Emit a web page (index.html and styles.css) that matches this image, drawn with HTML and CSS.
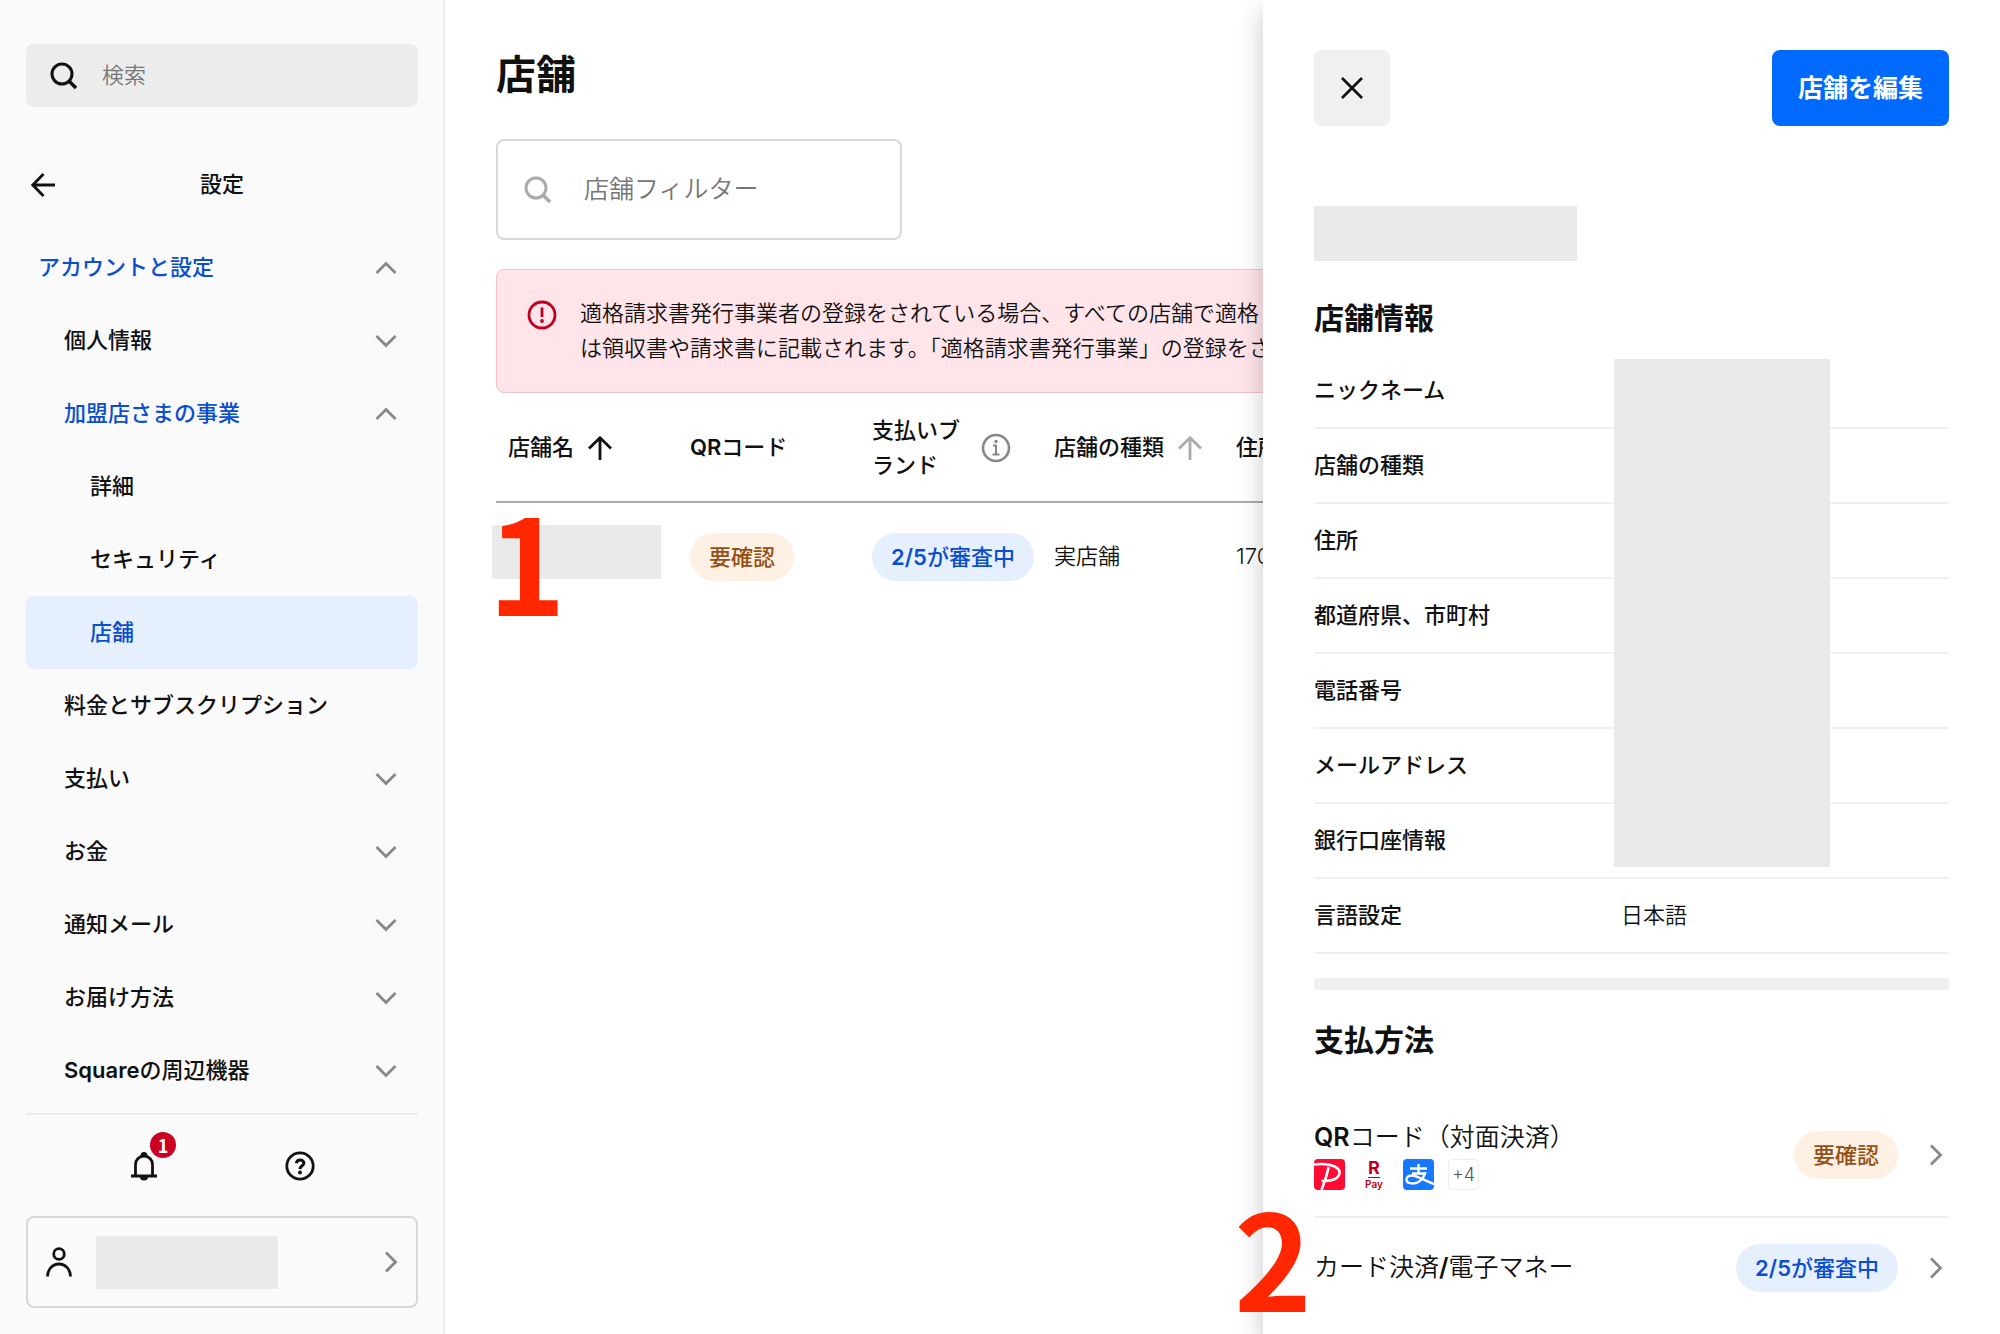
FILE: index.html
```html
<!DOCTYPE html>
<html lang="ja">
<head>
<meta charset="utf-8">
<meta name="viewport" content="width=device-width, initial-scale=1">
<title>店舗</title>
<link rel="stylesheet" href="styles.css">
</head>
<body>
<svg class="defs" aria-hidden="true">
  <symbol id="search" viewBox="0 0 28 28"><circle cx="12" cy="12" r="10" fill="none" stroke="currentColor" stroke-width="3"/><path d="M19 19l7 7" fill="none" stroke="currentColor" stroke-width="3.6"/></symbol>
  <symbol id="chevron" viewBox="0 0 22 22"><path d="M1.5 6L11 15.5 20.5 6" fill="none" stroke="currentColor" stroke-width="2.8"/></symbol>
  <symbol id="arrow" viewBox="0 0 24 24"><path d="M12 24V2M1 12.5L12 1.800l11 10.700" fill="none" stroke="currentColor" stroke-width="2.8"/></symbol>
</svg>
<div class="app">
  <aside class="sidebar">
    <label class="search">
      <svg class="search-icon"><use href="#search"/></svg>
      <input type="search" placeholder="検索" aria-label="検索">
    </label>
    <header class="nav-head">
      <button class="back" aria-label="戻る"><svg class="arrow"><use href="#arrow"/></svg></button>
      <h2>設定</h2>
    </header>
    <nav class="nav">
      <a class="item top open" href="#">アカウントと設定<svg class="chevron"><use href="#chevron"/></svg></a>
      <a class="item" href="#">個人情報<svg class="chevron"><use href="#chevron"/></svg></a>
      <a class="item open" href="#">加盟店さまの事業<svg class="chevron"><use href="#chevron"/></svg></a>
      <a class="item sub" href="#">詳細</a>
      <a class="item sub" href="#">セキュリティ</a>
      <a class="item sub current" href="#">店舗</a>
      <a class="item" href="#">料金とサブスクリプション</a>
      <a class="item" href="#">支払い<svg class="chevron"><use href="#chevron"/></svg></a>
      <a class="item" href="#">お金<svg class="chevron"><use href="#chevron"/></svg></a>
      <a class="item" href="#">通知メール<svg class="chevron"><use href="#chevron"/></svg></a>
      <a class="item" href="#">お届け方法<svg class="chevron"><use href="#chevron"/></svg></a>
      <a class="item" href="#"><span><span class="latin">Square</span>の周辺機器</span><svg class="chevron"><use href="#chevron"/></svg></a>
    </nav>
    <div class="tools">
      <button class="tool" aria-label="通知">
        <span class="bell">
          <svg width="26" height="30" viewBox="0 0 26 30"><path d="M0 25h26M4.500 25V13.500a8.500 8.500 0 0 1 17 0V25" fill="none" stroke="currentColor" stroke-width="2.800"/><path d="M9.500 5a3.500 4 0 0 1 7 0zM9 26h8a4 3.600 0 0 1-8 0z" fill="currentColor"/></svg>
          <span class="count">1</span>
        </span>
      </button>
      <button class="tool" aria-label="ヘルプ">
        <svg width="30" height="30" viewBox="0 0 30 30"><circle cx="15" cy="15" r="13.200" fill="none" stroke="currentColor" stroke-width="2.800"/><path d="M11.400 12.300c.3-2.400 1.800-3.300 3.700-3.300 2.200 0 3.800 1.300 3.800 3.100 0 2.800-3.700 2.600-3.900 6" fill="none" stroke="currentColor" stroke-width="3"/><circle cx="15" cy="21.500" r="1.900" fill="currentColor"/></svg>
      </button>
    </div>
    <button class="profile" aria-label="アカウント">
      <svg width="26" height="30" viewBox="0 0 26 30"><circle cx="13" cy="7" r="5.300" fill="none" stroke="currentColor" stroke-width="2.800"/><path d="M1.500 29.500a11.500 12.500 0 0 1 23 0" fill="none" stroke="currentColor" stroke-width="2.800"/></svg>
      <span class="mask profile-mask"></span>
      <svg class="chevron right"><use href="#chevron"/></svg>
    </button>
  </aside>

  <main class="main">
    <h1>店舗</h1>
    <label class="filter">
      <svg class="search-icon"><use href="#search"/></svg>
      <input type="search" placeholder="店舗フィルター" aria-label="店舗フィルター">
    </label>
    <div class="alert" role="alert">
      <svg width="30" height="30" viewBox="0 0 30 30"><circle cx="15" cy="15" r="13" fill="none" stroke="currentColor" stroke-width="2.800"/><path d="M15 7.500v9.500" stroke="currentColor" stroke-width="2.800"/><circle cx="15" cy="21" r="1.900" fill="currentColor"/></svg>
      <p>適格請求書発行事業者の登録をされている場合、すべての店舗で適格<br>は領収書や請求書に記載されます。「適格請求書発行事業」の登録をさ</p>
    </div>
    <table class="stores">
      <thead>
        <tr>
          <th scope="col"><span class="th">店舗名<svg class="arrow"><use href="#arrow"/></svg></span></th>
          <th scope="col"><span class="latin">QR</span>コード</th>
          <th scope="col"><span class="th spread"><span>支払いブランド</span><svg class="muted" width="30" height="30" viewBox="0 0 30 30"><circle cx="15" cy="15" r="13" fill="none" stroke="currentColor" stroke-width="2.600"/><path d="M12 12.500h3V21M11.500 21.500h7" fill="none" stroke="currentColor" stroke-width="2"/><circle cx="15" cy="8.500" r="1.700" fill="currentColor"/></svg></span></th>
          <th scope="col"><span class="th">店舗の種類<svg class="arrow pale"><use href="#arrow"/></svg></span></th>
          <th scope="col">住所</th>
        </tr>
      </thead>
      <tbody>
        <tr>
          <td class="name"><span class="mask name-mask"></span><span class="step step-one">1</span></td>
          <td><span class="badge warn">要確認</span></td>
          <td><span class="badge info"><span class="latin">2/5</span>が審査中</span></td>
          <td>実店舗</td>
          <td>170</td>
        </tr>
      </tbody>
    </table>
  </main>

  <section class="panel" aria-label="店舗の詳細">
    <header class="panel-head">
      <button class="close" aria-label="閉じる"><svg width="24" height="24" viewBox="0 0 24 24"><path d="M2 2l20 20M22 2L2 22" stroke="currentColor" stroke-width="2.800"/></svg></button>
      <button class="edit">店舗を編集</button>
    </header>
    <div class="mask title-mask"></div>
    <h2>店舗情報</h2>
    <div class="details-wrap">
      <table class="details">
        <tr><th scope="row">ニックネーム</th><td></td></tr>
        <tr><th scope="row">店舗の種類</th><td></td></tr>
        <tr><th scope="row">住所</th><td></td></tr>
        <tr><th scope="row">都道府県、市町村</th><td></td></tr>
        <tr><th scope="row">電話番号</th><td></td></tr>
        <tr><th scope="row">メールアドレス</th><td></td></tr>
        <tr><th scope="row">銀行口座情報</th><td></td></tr>
        <tr><th scope="row">言語設定</th><td>日本語</td></tr>
      </table>
      <div class="mask details-mask"></div>
    </div>
    <hr class="band">
    <h2>支払方法</h2>
    <div class="methods">
      <a class="method" href="#">
        <span class="method-name"><span><span class="latin">QR</span>コード（対面決済）</span>
          <span class="brands">
            <svg width="31" height="31" viewBox="0 0 31 31"><rect width="31" height="31" rx="4" fill="#ff0b34"/><path d="M0 5.500C10 4 25.500 6 25.500 13.500c0 6-8 9-18 8.500" fill="none" stroke="#fff" stroke-width="2.600"/><path d="M14.500 8C13 17 10 24 7.500 31" fill="none" stroke="#fff" stroke-width="2.600"/></svg>
            <span class="rpay"><span class="rpay-r">R</span><span class="rpay-pay">Pay</span></span>
            <svg width="31" height="31" viewBox="0 0 31 31"><rect width="31" height="31" rx="4" fill="#1677ff"/><path d="M7 9.500h17M15.500 5v9.500M9 14.500h13c-2 5.500-6.500 10-12 10-4 0-6.500-1.500-6.500-4 0-2.500 2.500-4 5.500-4 5 0 12.500 5 22 8.500" fill="none" stroke="#fff" stroke-width="2.400"/></svg>
            <span class="more">+4</span>
          </span>
        </span>
        <span class="badge warn">要確認</span>
        <svg class="chevron right"><use href="#chevron"/></svg>
      </a>
      <a class="method" href="#">
        <span class="method-name"><span>カード決済<span class="latin">/</span>電子マネー</span></span>
        <span class="badge info"><span class="latin">2/5</span>が審査中</span>
        <svg class="chevron right"><use href="#chevron"/></svg>
      </a>
      <span class="step step-two">2</span>
    </div>
  </section>
</div>
</body>
</html>
```
FILE: styles.css
```css
* { box-sizing: border-box; }

body {
  margin: 0;
  color: #111;
  background: #fff;
  font-family: Inter, "Noto Sans CJK JP", sans-serif;
  font-size: 22px;
  font-weight: 350;
  line-height: 35px;
}

h1, h2, p { margin: 0; }
a { color: inherit; text-decoration: none; }
svg { display: block; flex: none; }

button, input {
  margin: 0;
  padding: 0;
  border: 0;
  background: none;
  color: inherit;
  font: inherit;
}

input { flex: 1; min-width: 0; outline: 0; }
input::placeholder { color: #777; opacity: 1; }

.defs { position: absolute; width: 0; height: 0; }

.app {
  position: relative;
  display: grid;
  grid-template-columns: 445px minmax(0, 1fr);
  min-height: 100vh;
  overflow-x: clip;
}

.mask { display: block; background: #eaeaea; }
.arrow { width: 24px; height: 24px; }
.search-icon { width: 28px; height: 28px; }
.chevron { width: 22px; height: 22px; color: #888; }
.chevron.right { transform: rotate(-90deg); }
.muted { color: #888; }
.pale { color: #aaa; }
.latin { font-weight: 600; }

/* Sidebar */
.sidebar {
  display: flex;
  flex-direction: column;
  padding: 44px 25px 25px 26px;
  border-right: 2px solid #ececec;
  background: #fafafa;
}

.search {
  display: flex;
  align-items: center;
  gap: 24px;
  height: 63px;
  padding: 0 24px;
  border-radius: 8px;
  background: #ececec;
}

.nav-head {
  display: grid;
  grid-template-columns: 36px 1fr 36px;
  align-items: center;
  margin: 60px 0 29px;
}

.nav-head h2 { font-size: 22px; font-weight: 500; text-align: center; }
.back { padding-left: 5px; }
.back .arrow { transform: rotate(-90deg); }

.nav { border-bottom: 2px solid #ececec; padding-bottom: 6px; }

.item {
  display: flex;
  align-items: center;
  justify-content: space-between;
  height: 73px;
  padding: 0 21px 0 38px;
  border-radius: 8px;
  font-weight: 500;
}

.item.top { padding-left: 12px; }
.item.sub { padding-left: 64px; }
.item.open, .item.current { color: #0b4fce; }
.item.open .chevron { transform: rotate(180deg); }
.item.current { background: #e6effe; }

.tools { display: flex; justify-content: center; height: 101px; }
.tool { display: flex; width: 156px; align-items: center; justify-content: center; }
.bell { position: relative; }

.count {
  position: absolute;
  top: -19px;
  right: -19px;
  width: 26px;
  height: 26px;
  border-radius: 50%;
  background: #cc0023;
  color: #fff;
  font-family: "Noto Sans CJK JP", sans-serif;
  font-size: 18px;
  font-weight: 700;
  line-height: 26px;
  text-align: center;
}

.profile {
  display: flex;
  align-items: center;
  height: 92px;
  padding: 0 14px 0 18px;
  border: 2px solid #d8d8d8;
  border-radius: 8px;
}

.profile-mask { width: 182px; height: 53px; margin: 0 auto 0 24px; }

/* Store list */
.main { padding: 45px 50px 0 51px; }
.main h1 { font-size: 40px; font-weight: 600; line-height: 60px; }

.filter {
  display: flex;
  align-items: center;
  gap: 32px;
  width: 406px;
  height: 101px;
  margin-top: 34px;
  padding: 0 26px;
  border: 2px solid #d8d8d8;
  border-radius: 8px;
  font-size: 25px;
}

.filter .search-icon { color: #aaa; }

.alert {
  display: flex;
  gap: 23px;
  margin-top: 29px;
  padding: 26px 30px;
  border: 1px solid #f5c2cc;
  border-radius: 8px;
  background: #ffe5ea;
  white-space: nowrap;
}

.alert svg { margin-top: 4px; color: #bf0020; }

.stores { width: 100%; table-layout: fixed; border-collapse: collapse; }
.stores th, .stores td { padding: 19px 12px 18px; text-align: left; }
.stores th { width: 182px; height: 109px; border-bottom: 2px solid #aaa; font-weight: 500; }
.stores th:last-child { width: auto; }
.stores td { height: 107px; }
.stores .th { display: flex; align-items: center; gap: 14px; white-space: nowrap; }
.stores .spread { justify-content: space-between; padding-right: 19px; white-space: normal; }
.name { position: relative; }
.name-mask { position: absolute; top: 22px; left: -4px; width: 169px; height: 54px; }

.badge {
  display: inline-block;
  height: 48px;
  padding: 0 19px;
  border-radius: 24px;
  font-weight: 500;
  line-height: 48px;
  white-space: nowrap;
}

.warn { background: #fff0e4; color: #945017; }
.info { background: #e6effe; color: #0b4fce; }

/* Numbered markers */
.step {
  position: absolute;
  color: #ff2600;
  font-family: "Noto Sans CJK JP", sans-serif;
  font-size: 132px;
  font-weight: 700;
  line-height: 132px;
}

.step-one { top: -10px; left: -8px; }
.step-two { top: 96px; left: -80px; }

/* Detail panel */
.panel {
  position: absolute;
  top: 0;
  right: 0;
  width: 737px;
  min-height: 100%;
  padding: 50px 51px 0;
  background: #fff;
  box-shadow: 0 12px 24px rgba(0, 0, 0, 0.22);
}

.panel h2 { font-size: 30px; font-weight: 700; line-height: 44px; }
.panel-head { display: flex; justify-content: space-between; }

.close {
  display: grid;
  place-items: center;
  width: 76px;
  height: 76px;
  border-radius: 8px;
  background: #f0f0f0;
}

.edit {
  height: 76px;
  padding: 0 26px;
  border-radius: 8px;
  background: #006aff;
  color: #fff;
  font-size: 25px;
  font-weight: 700;
}

.title-mask { width: 263px; height: 55px; margin: 80px 0 35px; }

.details-wrap { position: relative; margin-top: 13px; }
.details { width: 100%; border-collapse: collapse; table-layout: fixed; }
.details th, .details td { height: 75px; padding: 0; border-bottom: 2px solid #f0f0f0; text-align: left; }
.details th { width: 307px; font-weight: 500; }
.details-mask { position: absolute; top: 6px; left: 300px; width: 216px; height: 508px; }

.band { height: 12px; margin: 24px 0 28px; border: 0; border-radius: 2px; background: #f0f0f0; }

.methods { position: relative; margin-top: 31px; }

.method {
  display: flex;
  align-items: center;
  height: 99px;
  padding-right: 2px;
  font-size: 25px;
}

.method:first-child { height: 125px; border-bottom: 2px solid #f0f0f0; }
.method-name { display: flex; flex-direction: column; gap: 4px; margin-right: auto; }
.method .badge { font-size: 22px; }
.method .chevron { margin-left: 27px; }

.brands { display: flex; gap: 14px; height: 31px; }

.rpay {
  display: flex;
  flex-direction: column;
  align-items: center;
  width: 30px;
  color: #bf0020;
}

.rpay-r {
  border-bottom: 1px solid #bf0020;
  font-size: 18px;
  font-weight: 700;
  line-height: 18px;
}

.rpay-pay { font-size: 10px; line-height: 12px; font-weight: 600; }

.more {
  width: 31px;
  height: 31px;
  border: 1px solid #eee;
  border-radius: 4px;
  color: #555;
  font-size: 18px;
  line-height: 29px;
  text-align: center;
}
```
